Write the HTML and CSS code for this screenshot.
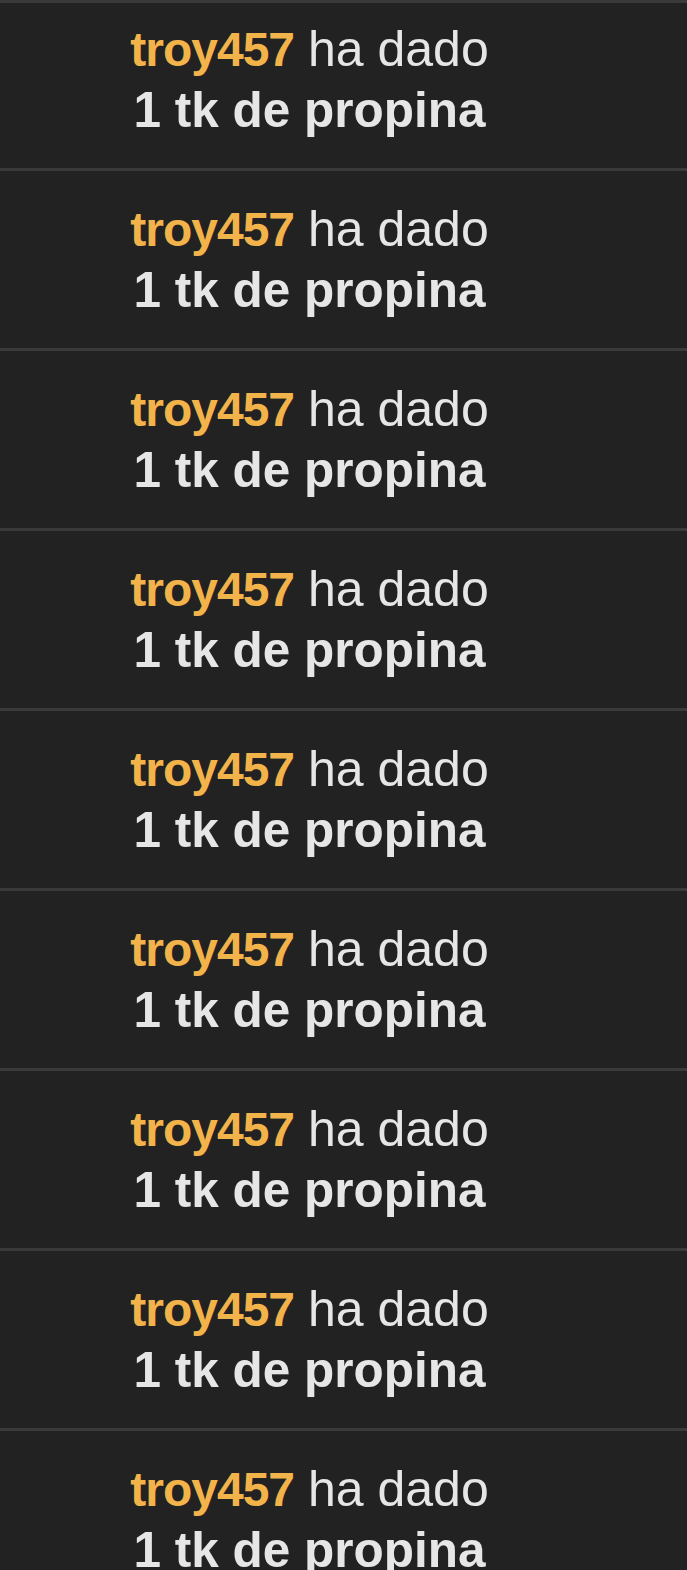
FILE: index.html
```html
<!DOCTYPE html>
<html lang="es">
  <head>
    <meta charset="UTF-8" />
    <meta name="viewport" content="width=device-width, initial-scale=1.0" />
    <title>Propinas</title>
    <link rel="stylesheet" href="styles.css">
  </head>
  <body>
    <div class="tip-list">
      <div class="tip-row first">
        <div class="tip-line"><span class="user">troy457</span> ha dado</div>
        <div class="tip-amount">1 tk de propina</div>
      </div>
      <div class="tip-row">
        <div class="tip-line"><span class="user">troy457</span> ha dado</div>
        <div class="tip-amount">1 tk de propina</div>
      </div>
      <div class="tip-row">
        <div class="tip-line"><span class="user">troy457</span> ha dado</div>
        <div class="tip-amount">1 tk de propina</div>
      </div>
      <div class="tip-row">
        <div class="tip-line"><span class="user">troy457</span> ha dado</div>
        <div class="tip-amount">1 tk de propina</div>
      </div>
      <div class="tip-row">
        <div class="tip-line"><span class="user">troy457</span> ha dado</div>
        <div class="tip-amount">1 tk de propina</div>
      </div>
      <div class="tip-row">
        <div class="tip-line"><span class="user">troy457</span> ha dado</div>
        <div class="tip-amount">1 tk de propina</div>
      </div>
      <div class="tip-row">
        <div class="tip-line"><span class="user">troy457</span> ha dado</div>
        <div class="tip-amount">1 tk de propina</div>
      </div>
      <div class="tip-row">
        <div class="tip-line"><span class="user">troy457</span> ha dado</div>
        <div class="tip-amount">1 tk de propina</div>
      </div>
      <div class="tip-row">
        <div class="tip-line"><span class="user">troy457</span> ha dado</div>
        <div class="tip-amount">1 tk de propina</div>
      </div>
    </div>
  </body>
</html>
```

FILE: styles.css
```css
html,
body {
  margin: 0;
  padding: 0;
  background-color: #222222;
}
body {
  font-family: "Liberation Sans", Arial, sans-serif;
  overflow: hidden;
}
.tip-list {
  border-top: 3px solid #3a3a3a;
}
.tip-row {
  padding: 28px 68px 28px 0;
  border-bottom: 3px solid #3a3a3a;
  text-align: center;
  line-height: 60px;
  color: #e6e6e6;
}
.tip-row.first {
  padding-top: 16px;
}
.tip-line {
  font-size: 50px;
  font-weight: normal;
}
.user {
  color: #f2b44a;
  font-size: 48px;
  font-weight: bold;
  letter-spacing: -1px;
}
.tip-amount {
  font-size: 49.5px;
  font-weight: bold;
}
```
